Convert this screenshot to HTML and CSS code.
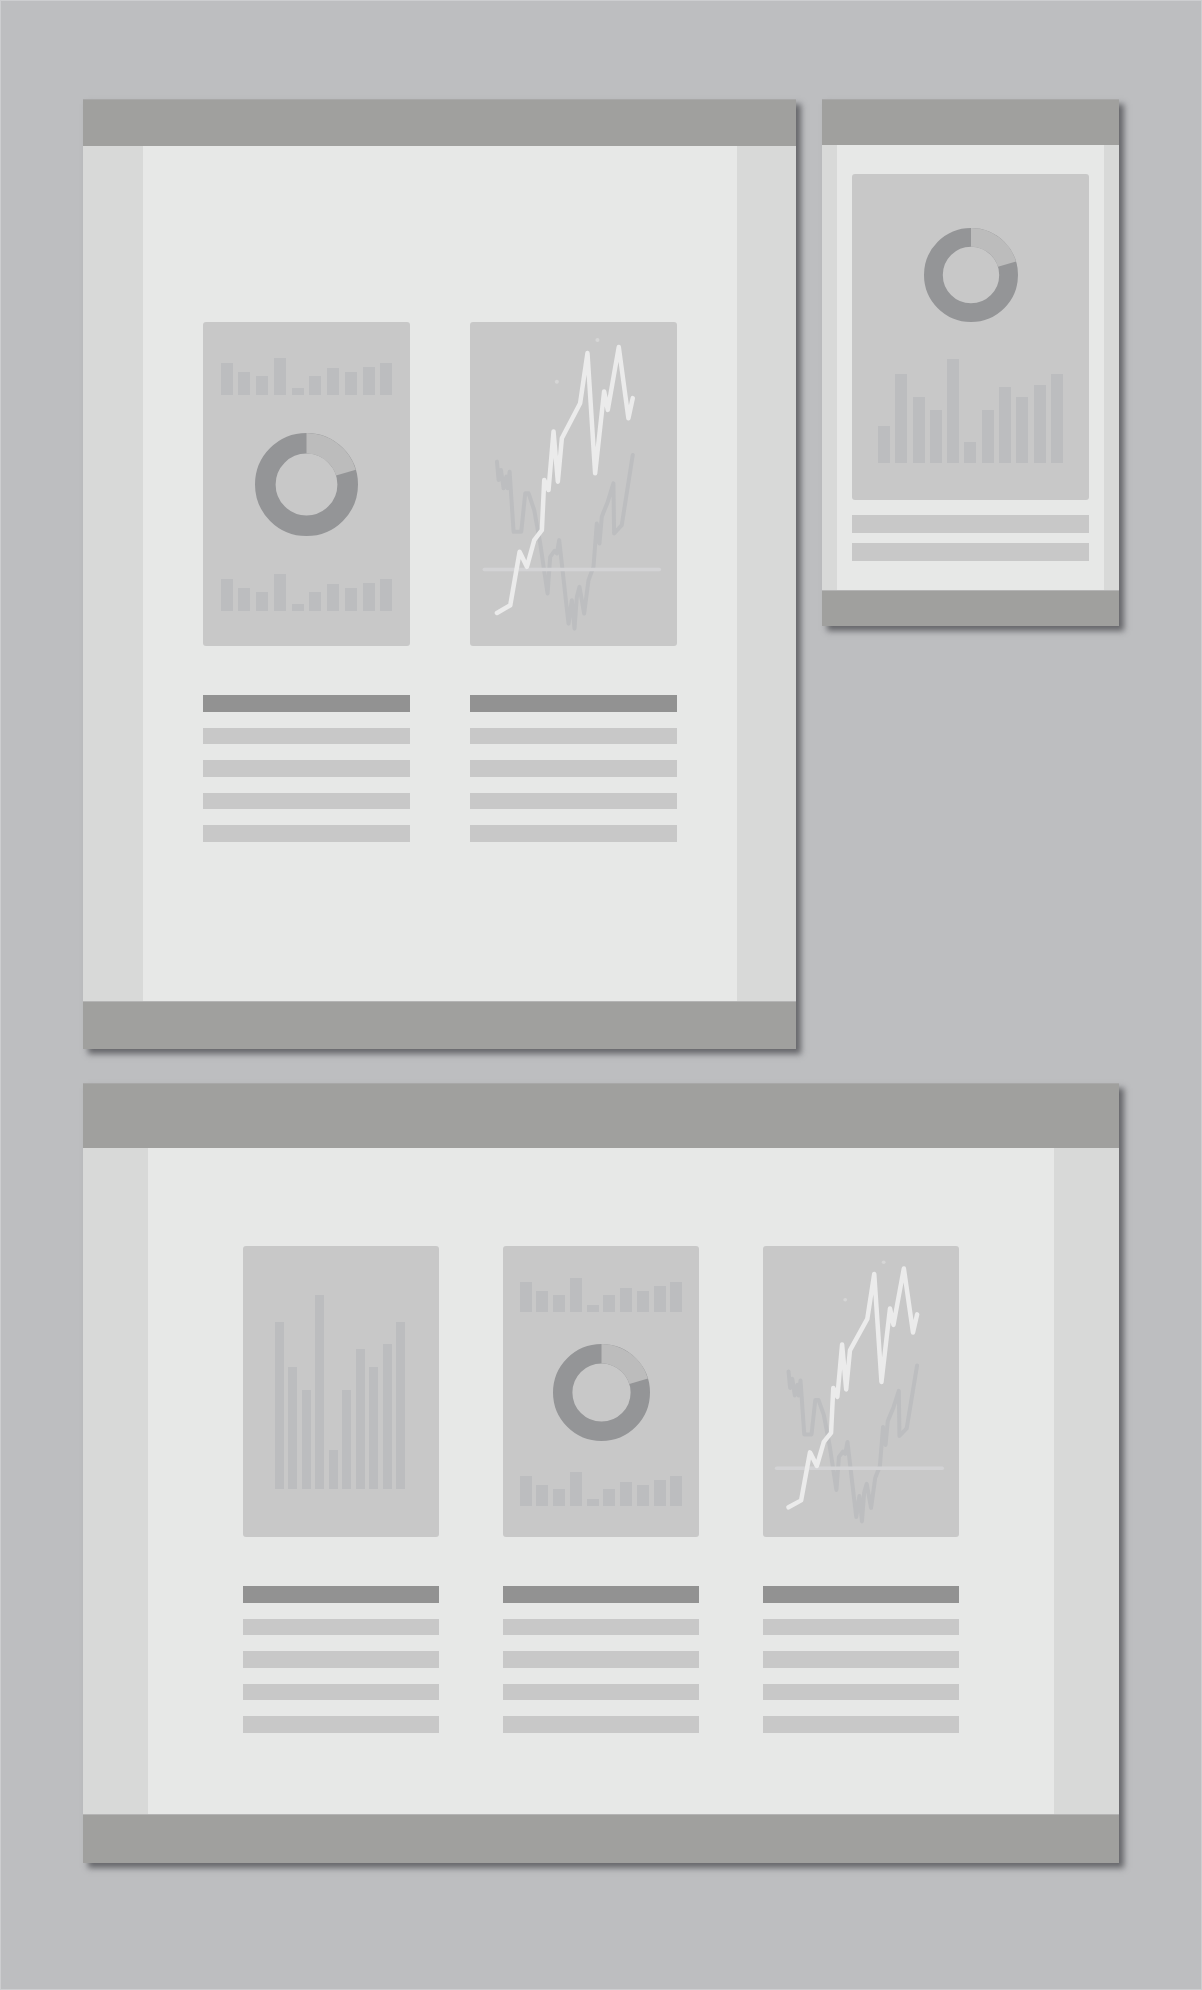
FILE: index.html
```html
<!DOCTYPE html>
<html>
<head>
    <title>Responsive Dashboard Wireframes</title>
    <link rel="stylesheet" href="styles.css">
</head>
<body>
    <div class="page">
        <div class="top-row">
            <!-- desktop -->
            <div class="window win-large">
                <div class="win-head"></div>
                <div class="win-body">
                    <div class="side"></div>
                    <div class="main">
                        <div class="columns">
                            <div class="col">
                                <div class="card donut-card">
                                    <div class="bars">
                                        <span style="height:87%"></span><span style="height:63%"></span><span style="height:51%"></span><span style="height:100%"></span><span style="height:20%"></span><span style="height:51%"></span><span style="height:72%"></span><span style="height:63%"></span><span style="height:76%"></span><span style="height:87%"></span>
                                    </div>
                                    <svg class="donut" viewBox="0 0 100 100">
                                        <circle cx="50" cy="50" r="40" class="ring-dark"/>
                                        <circle cx="50" cy="50" r="40" class="ring-light" transform="rotate(-90 50 50)"/>
                                    </svg>
                                    <div class="bars">
                                        <span style="height:87%"></span><span style="height:63%"></span><span style="height:51%"></span><span style="height:100%"></span><span style="height:20%"></span><span style="height:51%"></span><span style="height:72%"></span><span style="height:63%"></span><span style="height:76%"></span><span style="height:87%"></span>
                                    </div>
                                </div>
                                <div class="lines">
                                    <div class="line line-head"></div>
                                    <div class="line"></div>
                                    <div class="line"></div>
                                    <div class="line"></div>
                                    <div class="line"></div>
                                </div>
                            </div>
                            <div class="col">
                                <div class="card chart-card">
                                    <svg class="linechart" viewBox="29 37 622 970" preserveAspectRatio="none">
                                        <polyline class="gray-line" points="110,455 115,510 122,480 130,535 138,500 142,535 148,485 160,665 183,665 195,550 205,550 222,600 240,700 262,850 270,740 283,722 290,730 297,690 325,940 335,870 343,955 350,860 358,830 372,910 385,810 400,770 410,640 418,700 425,620 433,600 443,575 460,520 462,670 485,645 518,435"/>
                                        <line class="axis" x1="72" y1="778" x2="598" y2="778"/>
                                        <polyline class="white-line" points="110,908 150,885 178,725 200,770 222,690 245,660 252,510 265,540 280,365 293,515 305,385 360,280 382,130 405,490 432,245 443,300 476,112 505,325 518,265"/>
                                        <circle class="dot" cx="290" cy="216" r="6"/>
                                        <circle class="dot" cx="412" cy="91" r="6"/>
                                    </svg>
                                </div>
                                <div class="lines">
                                    <div class="line line-head"></div>
                                    <div class="line"></div>
                                    <div class="line"></div>
                                    <div class="line"></div>
                                    <div class="line"></div>
                                </div>
                            </div>
                        </div>
                    </div>
                    <div class="side"></div>
                </div>
                <div class="win-foot"></div>
            </div>

            <!-- phone -->
            <div class="window win-small">
                <div class="win-head"></div>
                <div class="win-body">
                    <div class="side"></div>
                    <div class="main">
                        <div class="card phone-card">
                            <svg class="donut" viewBox="0 0 100 100">
                                <circle cx="50" cy="50" r="40" class="ring-dark"/>
                                <circle cx="50" cy="50" r="40" class="ring-light" transform="rotate(-90 50 50)"/>
                            </svg>
                            <div class="bars">
                                <span style="height:36%"></span><span style="height:86%"></span><span style="height:63%"></span><span style="height:51%"></span><span style="height:100%"></span><span style="height:20%"></span><span style="height:51%"></span><span style="height:73%"></span><span style="height:63%"></span><span style="height:75%"></span><span style="height:86%"></span>
                            </div>
                        </div>
                        <div class="lines">
                            <div class="line"></div>
                            <div class="line"></div>
                        </div>
                    </div>
                    <div class="side"></div>
                </div>
                <div class="win-foot"></div>
            </div>
        </div>

        <!-- tablet / wide -->
        <div class="window win-wide">
            <div class="win-head"></div>
            <div class="win-body">
                <div class="side"></div>
                <div class="main">
                    <div class="columns">
                        <div class="col">
                            <div class="card tall-bar-card">
                                <div class="bars">
                                    <span style="height:86%"></span><span style="height:63%"></span><span style="height:51%"></span><span style="height:100%"></span><span style="height:20%"></span><span style="height:51%"></span><span style="height:72%"></span><span style="height:63%"></span><span style="height:75%"></span><span style="height:86%"></span>
                                </div>
                            </div>
                            <div class="lines">
                                <div class="line line-head"></div>
                                <div class="line"></div>
                                <div class="line"></div>
                                <div class="line"></div>
                                <div class="line"></div>
                            </div>
                        </div>
                        <div class="col">
                            <div class="card donut-card">
                                <div class="bars">
                                    <span style="height:87%"></span><span style="height:63%"></span><span style="height:51%"></span><span style="height:100%"></span><span style="height:20%"></span><span style="height:51%"></span><span style="height:72%"></span><span style="height:63%"></span><span style="height:76%"></span><span style="height:87%"></span>
                                </div>
                                <svg class="donut" viewBox="0 0 100 100">
                                    <circle cx="50" cy="50" r="40" class="ring-dark"/>
                                    <circle cx="50" cy="50" r="40" class="ring-light" transform="rotate(-90 50 50)"/>
                                </svg>
                                <div class="bars">
                                    <span style="height:87%"></span><span style="height:63%"></span><span style="height:51%"></span><span style="height:100%"></span><span style="height:20%"></span><span style="height:51%"></span><span style="height:72%"></span><span style="height:63%"></span><span style="height:76%"></span><span style="height:87%"></span>
                                </div>
                            </div>
                            <div class="lines">
                                <div class="line line-head"></div>
                                <div class="line"></div>
                                <div class="line"></div>
                                <div class="line"></div>
                                <div class="line"></div>
                            </div>
                        </div>
                        <div class="col">
                            <div class="card chart-card">
                                <svg class="linechart" viewBox="29 37 622 970" preserveAspectRatio="none">
                                    <polyline class="gray-line" points="110,455 115,510 122,480 130,535 138,500 142,535 148,485 160,665 183,665 195,550 205,550 222,600 240,700 262,850 270,740 283,722 290,730 297,690 325,940 335,870 343,955 350,860 358,830 372,910 385,810 400,770 410,640 418,700 425,620 433,600 443,575 460,520 462,670 485,645 518,435"/>
                                    <line class="axis" x1="72" y1="778" x2="598" y2="778"/>
                                    <polyline class="white-line" points="110,908 150,885 178,725 200,770 222,690 245,660 252,510 265,540 280,365 293,515 305,385 360,280 382,130 405,490 432,245 443,300 476,112 505,325 518,265"/>
                                    <circle class="dot" cx="290" cy="216" r="6"/>
                                    <circle class="dot" cx="412" cy="91" r="6"/>
                                </svg>
                            </div>
                            <div class="lines">
                                <div class="line line-head"></div>
                                <div class="line"></div>
                                <div class="line"></div>
                                <div class="line"></div>
                                <div class="line"></div>
                            </div>
                        </div>
                    </div>
                </div>
                <div class="side"></div>
            </div>
            <div class="win-foot"></div>
        </div>
    </div>
</body>
</html>
```

FILE: styles.css
```css
body {
    margin: 0;
    background: #bdbec0;
    font-family: "Liberation Sans", Arial, sans-serif;
}

.page {
    width: 1202px;
    height: 1990px;
    box-sizing: border-box;
    border: 1px solid #cdced0;
    padding: 98px 0 0 82px;
}

.top-row {
    display: flex;
    align-items: flex-start;
    gap: 26px;
}

/* window frame */
.window {
    display: flex;
    flex-direction: column;
    box-shadow: 5px 5px 6px rgba(45, 45, 50, 0.6);
}

.win-head,
.win-foot {
    background: #a0a09e;
}

.win-head {
    border-top: 1px solid #a8a8a8;
    box-sizing: border-box;
}

.win-foot {
    border-top: 1px solid #b4b4b4;
    box-sizing: border-box;
}

.win-body {
    display: flex;
    flex: 1;
}

.side {
    background: #d8d9d8;
}

.main {
    flex: 1;
    background: #e7e8e7;
    box-sizing: border-box;
}

.win-large {
    width: 713px;
    height: 950px;
}

.win-large .win-head { height: 47px; }
.win-large .win-foot { height: 48px; }
.win-large .side { width: 60px; }
.win-large .side:last-child { width: 59px; }
.win-large .main { padding-top: 176px; }

.win-small {
    width: 297px;
    height: 527px;
}

.win-small .win-head { height: 46px; }
.win-small .win-foot { height: 36px; }
.win-small .side { width: 15px; }
.win-small .main { padding: 29px 15px 0; }

.win-wide {
    margin-top: 34px;
    width: 1036px;
    height: 780px;
}

.win-wide .win-head { height: 65px; }
.win-wide .win-foot { height: 49px; }
.win-wide .side { width: 65px; }
.win-wide .main { padding-top: 98px; }

/* columns */
.columns {
    display: flex;
    justify-content: center;
}

.win-large .columns { gap: 60px; }
.win-large .col { width: 207px; }
.win-large .card { height: 324px; }

.win-wide .columns { gap: 64px; }
.win-wide .col { width: 196px; }
.win-wide .card { height: 291px; }

.card {
    background: #c8c8c8;
    border-radius: 3px;
    box-sizing: border-box;
}

/* text placeholder lines */
.lines {
    display: flex;
    flex-direction: column;
    gap: 16px;
    margin-top: 49px;
}

.line {
    height: 16.5px;
    background: #c8c8c8;
}

.line-head {
    background: #929292;
}

.win-small .lines {
    margin-top: 15px;
    gap: 10px;
}

.win-small .line {
    height: 18px;
}

/* bar charts */
.bars {
    display: flex;
    justify-content: space-between;
    align-items: flex-end;
}

.bars span {
    display: block;
    width: 12px;
    background: #bcbdbf;
}

.donut-card {
    display: flex;
    flex-direction: column;
    justify-content: space-between;
    align-items: center;
}

.win-large .donut-card {
    padding: 36px 18px 35px;
}

.win-large .donut-card .bars {
    width: 172px;
    height: 37px;
}

.win-large .donut {
    width: 103px;
    height: 103px;
}

.win-wide .donut-card {
    padding: 32px 16px 31px;
}

.win-wide .donut-card .bars {
    width: 163px;
    height: 34px;
}

.win-wide .donut {
    width: 97px;
    height: 97px;
}

.phone-card {
    height: 326px;
    display: flex;
    flex-direction: column;
    justify-content: space-between;
    align-items: center;
    padding: 54px 26px 37px;
}

.phone-card .donut {
    width: 94px;
    height: 94px;
}

.phone-card .bars {
    width: 185px;
    height: 104px;
}

.tall-bar-card {
    display: flex;
    align-items: flex-end;
    padding: 0 34px 48px 32px;
}

.tall-bar-card .bars {
    width: 130px;
    height: 194px;
}

.tall-bar-card .bars span {
    width: 9px;
}

/* donut */
.donut circle {
    fill: none;
    stroke-width: 20;
}

.ring-dark {
    stroke: #949597;
}

.ring-light {
    stroke: #bcbcbc;
    stroke-dasharray: 51 300;
}

/* line chart */
.linechart {
    display: block;
    width: 100%;
    height: 100%;
}

.linechart polyline,
.linechart line {
    fill: none;
    stroke-linecap: round;
    stroke-linejoin: round;
    vector-effect: non-scaling-stroke;
}

.gray-line {
    stroke: #bdbec0;
    stroke-width: 4;
}

.axis {
    stroke: #d3d3d5;
    stroke-width: 3.5;
}

.white-line {
    stroke: #ebebeb;
    stroke-width: 4.5;
}

.dot {
    fill: #d6d6d6;
}
```
